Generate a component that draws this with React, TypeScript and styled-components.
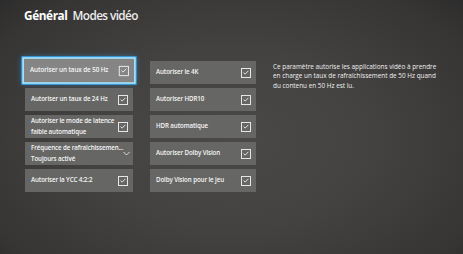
import React from 'react';
import styled, { createGlobalStyle } from 'styled-components';

const GlobalStyle = createGlobalStyle`
  html, body {
    margin: 0;
    padding: 0;
    background: #383736;
  }
  body {
    font-family: "Open Sans", "Noto Sans", sans-serif;
  }
`;

const Screen = styled.div`
  width: 463px;
  height: 254px;
  box-sizing: border-box;
  padding: 7px 0 0 24px;
  overflow: hidden;
  background:
    radial-gradient(ellipse 70% 80% at 50% 55%, #4a4948 0%, #434241 45%, #363534 85%, #2d2c2c 100%);
  color: #f2f2f2;
`;

const Header = styled.h1`
  margin: 0;
  display: flex;
  gap: 5px;
  font-size: 11.8px;
  line-height: 16px;
  font-weight: 700;
`;

const Section = styled.span<{ $light?: boolean }>`
  font-weight: ${p => (p.$light ? 600 : 700)};
  color: ${p => (p.$light ? '#ececec' : '#ffffff')};
  letter-spacing: ${p => (p.$light ? '-0.6px' : '-0.4px')};
`;

const Body = styled.div`
  display: grid;
  grid-template-columns: 108px 106px 172px;
  column-gap: 17px;
  margin-top: 38px;
  margin-left: 1px;
`;

const Column = styled.div`
  display: flex;
  flex-direction: column;
  gap: 4px;
`;

const Tile = styled.div<{ $focused?: boolean }>`
  height: 23px;
  box-sizing: border-box;
  display: flex;
  align-items: center;
  justify-content: space-between;
  padding: 0 5px 0 6px;
  background: ${p => (p.$focused ? '#858585' : '#666665')};
  color: #f6f6f6;
  font-size: 6.2px;
  font-weight: 600;
  letter-spacing: -0.1px;
  line-height: 8.5px;
  ${p =>
    p.$focused &&
    `
    transform: translateY(-2px) scale(1.02);
    box-shadow: 0 0 0 1.5px #a9e6ff, 0 0 0 2.5px #3aa8f0, 0 0 6px 2px rgba(60, 170, 255, 0.55);
  `}
`;

const Label = styled.div`
  display: flex;
  flex-direction: column;
  white-space: nowrap;
`;

const SubLabel = styled.span`
  margin-top: 2px;
`;

const Box = styled.div`
  width: 8px;
  height: 8px;
  flex: none;
  border: 1px solid #e6e6e6;
  display: flex;
  align-items: center;
  justify-content: center;
`;

const Chevron = styled.svg`
  width: 7px;
  height: 5px;
  flex: none;
  margin-right: 2px;
`;

const Description = styled.p`
  margin: 0;
  padding-top: 1px;
  font-size: 6.4px;
  line-height: 9.3px;
  font-weight: 500;
  color: #f0f0f0;
  white-space: nowrap;
`;

const Check = () => (
  <Box>
    <svg width="6" height="5" viewBox="0 0 6 5">
      <path d="M0.6 2.6 L2.2 4.1 L5.4 0.8" fill="none" stroke="#f2f2f2" strokeWidth="0.9" />
    </svg>
  </Box>
);

type Item = { label: string; sub?: string; dropdown?: boolean; focused?: boolean };

const left: Item[] = [
  { label: 'Autoriser un taux de 50 Hz', focused: true },
  { label: 'Autoriser un taux de 24 Hz' },
  { label: 'Autoriser le mode de latence', sub: 'faible automatique' },
  { label: 'Fréquence de rafraîchissemen...', sub: 'Toujours activé', dropdown: true },
  { label: 'Autoriser la YCC 4:2:2' },
];

const right: Item[] = [
  { label: 'Autoriser le 4K' },
  { label: 'Autoriser HDR10' },
  { label: 'HDR automatique' },
  { label: 'Autoriser Dolby Vision' },
  { label: 'Dolby Vision pour le jeu' },
];

const Option = ({ item }: { item: Item }) => (
  <Tile $focused={item.focused}>
    <Label>
      <span>{item.label}</span>
      {item.sub && <SubLabel>{item.sub}</SubLabel>}
    </Label>
    {item.dropdown ? (
      <Chevron viewBox="0 0 7 5">
        <path d="M0.5 1 L3.5 4 L6.5 1" fill="none" stroke="#e6e6e6" strokeWidth="0.9" />
      </Chevron>
    ) : (
      <Check />
    )}
  </Tile>
);

export default function App() {
  return (
    <>
      <GlobalStyle />
      <Screen>
        <Header>
          <Section>Général</Section>
          <Section $light>Modes vidéo</Section>
        </Header>
        <Body>
          <Column>
            {left.map(item => (
              <Option key={item.label} item={item} />
            ))}
          </Column>
          <Column>
            {right.map(item => (
              <Option key={item.label} item={item} />
            ))}
          </Column>
          <Description>
            Ce paramètre autorise les applications vidéo à prendre
            <br />
            en charge un taux de rafraîchissement de 50 Hz quand
            <br />
            du contenu en 50 Hz est lu.
          </Description>
        </Body>
      </Screen>
    </>
  );
}
